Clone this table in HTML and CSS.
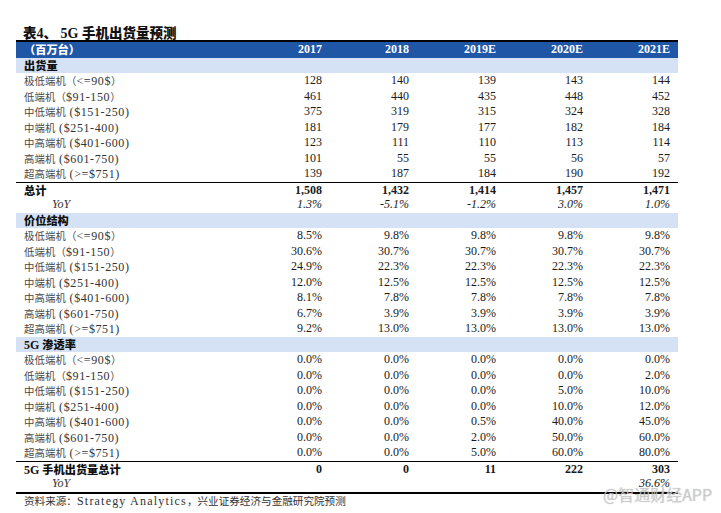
FILE: index.html
```html
<!DOCTYPE html>
<html lang="zh-CN">
<head>
<meta charset="utf-8">
<title>5G 手机出货量预测</title>
<link rel="stylesheet" href="styles.css">
</head>
<body>
<div class="page">
  <h1 class="title"><span class="tzh">表</span>4<span class="tzh">、</span> <span class="tlt">5G</span> <span class="tzh">手机出货量预测</span></h1>
  <div class="table">
    <div class="row head">
      <div class="l"><span class="bzh">（百万台）</span></div>
      <div class="c">2017</div><div class="c">2018</div><div class="c">2019E</div><div class="c">2020E</div><div class="c">2021E</div>
    </div>
    <div class="row band"><div class="l"><span class="bzh">出货量</span></div></div>
    <div class="row"><div class="l"><span class="zh">极低端机（</span><span class="lt">&lt;=90$</span><span class="zh">）</span></div><div class="c">128</div><div class="c">140</div><div class="c">139</div><div class="c">143</div><div class="c">144</div></div>
    <div class="row"><div class="l"><span class="zh">低端机（</span><span class="lt">$91-150</span><span class="zh">）</span></div><div class="c">461</div><div class="c">440</div><div class="c">435</div><div class="c">448</div><div class="c">452</div></div>
    <div class="row"><div class="l"><span class="zh">中低端机</span><span class="lt"> ($151-250)</span></div><div class="c">375</div><div class="c">319</div><div class="c">315</div><div class="c">324</div><div class="c">328</div></div>
    <div class="row"><div class="l"><span class="zh">中端机</span><span class="lt"> ($251-400)</span></div><div class="c">181</div><div class="c">179</div><div class="c">177</div><div class="c">182</div><div class="c">184</div></div>
    <div class="row"><div class="l"><span class="zh">中高端机</span><span class="lt"> ($401-600)</span></div><div class="c">123</div><div class="c">111</div><div class="c">110</div><div class="c">113</div><div class="c">114</div></div>
    <div class="row"><div class="l"><span class="zh">高端机</span><span class="lt"> ($601-750)</span></div><div class="c">101</div><div class="c">55</div><div class="c">55</div><div class="c">56</div><div class="c">57</div></div>
    <div class="row"><div class="l"><span class="zh">超高端机</span><span class="lt"> (&gt;=$751)</span></div><div class="c">139</div><div class="c">187</div><div class="c">184</div><div class="c">190</div><div class="c">192</div></div>
    <div class="row total ruled"><div class="l"><span class="bzh">总计</span></div><div class="c">1,508</div><div class="c">1,432</div><div class="c">1,414</div><div class="c">1,457</div><div class="c">1,471</div></div>
    <div class="row yoy"><div class="l">YoY</div><div class="c">1.3%</div><div class="c">-5.1%</div><div class="c">-1.2%</div><div class="c">3.0%</div><div class="c">1.0%</div></div>
    <div class="row band"><div class="l"><span class="bzh">价位结构</span></div></div>
    <div class="row"><div class="l"><span class="zh">极低端机（</span><span class="lt">&lt;=90$</span><span class="zh">）</span></div><div class="c">8.5%</div><div class="c">9.8%</div><div class="c">9.8%</div><div class="c">9.8%</div><div class="c">9.8%</div></div>
    <div class="row"><div class="l"><span class="zh">低端机（</span><span class="lt">$91-150</span><span class="zh">）</span></div><div class="c">30.6%</div><div class="c">30.7%</div><div class="c">30.7%</div><div class="c">30.7%</div><div class="c">30.7%</div></div>
    <div class="row"><div class="l"><span class="zh">中低端机</span><span class="lt"> ($151-250)</span></div><div class="c">24.9%</div><div class="c">22.3%</div><div class="c">22.3%</div><div class="c">22.3%</div><div class="c">22.3%</div></div>
    <div class="row"><div class="l"><span class="zh">中端机</span><span class="lt"> ($251-400)</span></div><div class="c">12.0%</div><div class="c">12.5%</div><div class="c">12.5%</div><div class="c">12.5%</div><div class="c">12.5%</div></div>
    <div class="row"><div class="l"><span class="zh">中高端机</span><span class="lt"> ($401-600)</span></div><div class="c">8.1%</div><div class="c">7.8%</div><div class="c">7.8%</div><div class="c">7.8%</div><div class="c">7.8%</div></div>
    <div class="row"><div class="l"><span class="zh">高端机</span><span class="lt"> ($601-750)</span></div><div class="c">6.7%</div><div class="c">3.9%</div><div class="c">3.9%</div><div class="c">3.9%</div><div class="c">3.9%</div></div>
    <div class="row"><div class="l"><span class="zh">超高端机</span><span class="lt"> (&gt;=$751)</span></div><div class="c">9.2%</div><div class="c">13.0%</div><div class="c">13.0%</div><div class="c">13.0%</div><div class="c">13.0%</div></div>
    <div class="row band"><div class="l"><span class="blt">5G</span> <span class="bzh">渗透率</span></div></div>
    <div class="row"><div class="l"><span class="zh">极低端机（</span><span class="lt">&lt;=90$</span><span class="zh">）</span></div><div class="c">0.0%</div><div class="c">0.0%</div><div class="c">0.0%</div><div class="c">0.0%</div><div class="c">0.0%</div></div>
    <div class="row"><div class="l"><span class="zh">低端机（</span><span class="lt">$91-150</span><span class="zh">）</span></div><div class="c">0.0%</div><div class="c">0.0%</div><div class="c">0.0%</div><div class="c">0.0%</div><div class="c">2.0%</div></div>
    <div class="row"><div class="l"><span class="zh">中低端机</span><span class="lt"> ($151-250)</span></div><div class="c">0.0%</div><div class="c">0.0%</div><div class="c">0.0%</div><div class="c">5.0%</div><div class="c">10.0%</div></div>
    <div class="row"><div class="l"><span class="zh">中端机</span><span class="lt"> ($251-400)</span></div><div class="c">0.0%</div><div class="c">0.0%</div><div class="c">0.0%</div><div class="c">10.0%</div><div class="c">12.0%</div></div>
    <div class="row"><div class="l"><span class="zh">中高端机</span><span class="lt"> ($401-600)</span></div><div class="c">0.0%</div><div class="c">0.0%</div><div class="c">0.5%</div><div class="c">40.0%</div><div class="c">45.0%</div></div>
    <div class="row"><div class="l"><span class="zh">高端机</span><span class="lt"> ($601-750)</span></div><div class="c">0.0%</div><div class="c">0.0%</div><div class="c">2.0%</div><div class="c">50.0%</div><div class="c">60.0%</div></div>
    <div class="row"><div class="l"><span class="zh">超高端机</span><span class="lt"> (&gt;=$751)</span></div><div class="c">0.0%</div><div class="c">0.0%</div><div class="c">5.0%</div><div class="c">60.0%</div><div class="c">80.0%</div></div>
    <div class="row total ruled"><div class="l"><span class="blt">5G</span> <span class="bzh">手机出货量总计</span></div><div class="c">0</div><div class="c">0</div><div class="c">11</div><div class="c">222</div><div class="c">303</div></div>
    <div class="row yoy"><div class="l">YoY</div><div class="c"></div><div class="c"></div><div class="c"></div><div class="c"></div><div class="c">36.6%</div></div>
  </div>
  <p class="source"><span class="szh">资料来源：</span><span class="slt">Strategy Analytics</span><span class="szh">，兴业证券经济与金融研究院预测</span></p>
  <div class="watermark">@智通财经APP</div>
</div>
</body>
</html>
```

FILE: styles.css
```css
html, body {
  margin: 0;
  padding: 0;
  background: #ffffff;
}

.page {
  position: relative;
  width: 721px;
  height: 513px;
  padding-left: 16px;
  box-sizing: border-box;
  font-family: "Liberation Serif", "Noto Sans CJK SC", serif;
  color: #1a1a1a;
  overflow: hidden;
}

.title {
  margin: 24px 0 0 0;
  padding-left: 7px;
  height: 16px;
  line-height: 16px;
  font-size: 14px;
  font-weight: 700;
  color: #111;
  white-space: pre;
}

.tzh {
  font-family: "Noto Sans CJK SC", sans-serif;
  font-weight: 900;
  font-size: 13.5px;
}

.tlt {
  font-family: "Liberation Serif", serif;
}

.table {
  width: 662px;
  border-top: 2px solid #000;
  border-bottom: 2px solid #000;
}

.row {
  display: grid;
  grid-template-columns: 227px repeat(5, 87px);
  height: 15.5px;
  line-height: 15.5px;
  font-size: 12px;
  box-sizing: border-box;
}

.l {
  padding-left: 8px;
  white-space: nowrap;
  color: #333;
}

.c {
  text-align: right;
  padding-right: 8px;
}

.zh {
  font-family: "Noto Sans CJK SC", sans-serif;
  font-size: 10.4px;
  letter-spacing: 0.1px;
  color: #4a4a4a;
}

.lt {
  letter-spacing: 0.6px;
}

.bzh {
  font-family: "Noto Sans CJK SC", sans-serif;
  font-weight: 900;
  font-size: 11.2px;
  color: #111;
}

.blt {
  font-weight: 700;
  color: #111;
}

.head {
  background: #1f56a6;
  color: #ffffff;
  font-weight: 700;
}

.head .l,
.head .bzh {
  color: #ffffff;
}

.band {
  background: #d5e2f5;
}

.total {
  font-weight: 700;
}

.ruled {
  border-top: 1px solid #000;
  line-height: 14.5px;
}

.yoy {
  font-style: italic;
}

.yoy .l {
  padding-left: 36px;
  color: #333;
}

.source {
  margin: 0;
  padding-left: 8px;
  height: 14px;
  line-height: 14px;
  font-size: 12px;
  color: #333;
  white-space: nowrap;
}

.szh {
  font-family: "Noto Sans CJK SC", sans-serif;
  font-size: 10.6px;
}

.slt {
  letter-spacing: 1.2px;
}

.watermark {
  position: absolute;
  left: 603px;
  top: 485px;
  font-family: "Noto Sans CJK SC", sans-serif;
  font-size: 16px;
  line-height: 18px;
  color: rgba(205, 205, 205, 0.75);
  text-shadow: 0 0 1px rgba(150, 150, 150, 0.6);
  white-space: nowrap;
}
```
